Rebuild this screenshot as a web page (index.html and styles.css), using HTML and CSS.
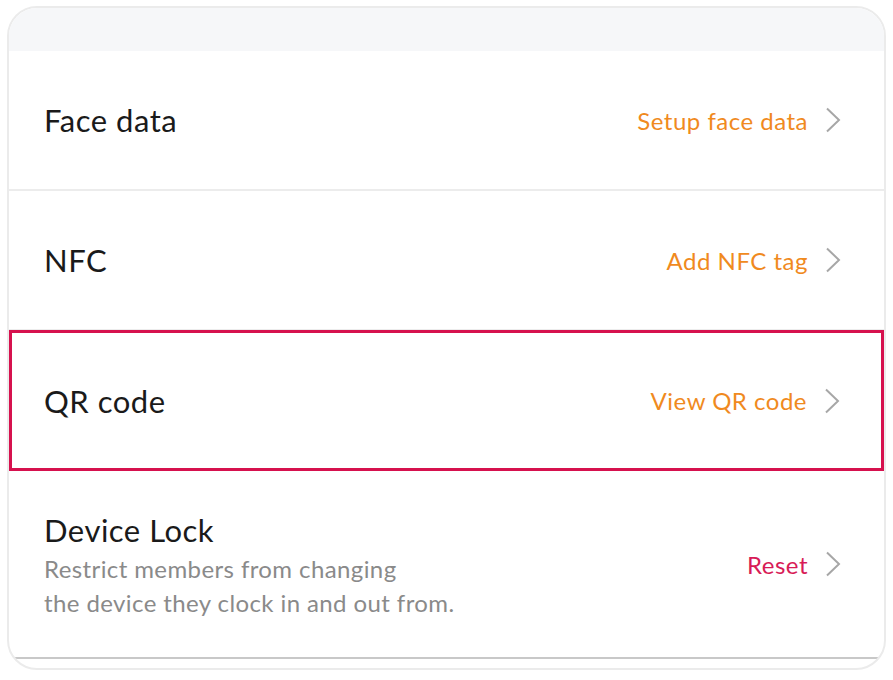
FILE: index.html
```html
<!DOCTYPE html>
<html>
<head>
<meta charset="utf-8">
<link rel="stylesheet" href="styles.css">
</head>
<body>
<div class="card">
  <div class="band"></div>
  <div class="row">
    <div class="label">Face data</div>
    <div class="action orange">Setup face data
      <svg class="chev" width="16" height="26" viewBox="0 0 16 26"><polyline points="2,1.5 14,13 2,24.5" fill="none" stroke="#a7a7a7" stroke-width="2"/></svg>
    </div>
  </div>
  <div class="row">
    <div class="label">NFC</div>
    <div class="action orange">Add NFC tag
      <svg class="chev" width="16" height="26" viewBox="0 0 16 26"><polyline points="2,1.5 14,13 2,24.5" fill="none" stroke="#a7a7a7" stroke-width="2"/></svg>
    </div>
  </div>
  <div class="row selected">
    <div class="label">QR code</div>
    <div class="action orange">View QR code
      <svg class="chev" width="16" height="26" viewBox="0 0 16 26"><polyline points="2,1.5 14,13 2,24.5" fill="none" stroke="#a7a7a7" stroke-width="2"/></svg>
    </div>
  </div>
  <div class="row tall">
    <div class="text">
      <div class="label">Device Lock</div>
      <div class="desc">Restrict members from changing<br>the device they clock in and out from.</div>
    </div>
    <div class="action red">Reset
      <svg class="chev" width="16" height="26" viewBox="0 0 16 26"><polyline points="2,1.5 14,13 2,24.5" fill="none" stroke="#a7a7a7" stroke-width="2"/></svg>
    </div>
  </div>
  <div class="foot"></div>
</div>
</body>
</html>
```
FILE: styles.css
```css
html, body {
  margin: 0;
  padding: 0;
  background: #ffffff;
}
body {
  font-family: "Lato", "Noto Sans", sans-serif;
  padding: 6px 7px 0 7px;
}
.card {
  height: 664px;
  border: 2px solid #ebebeb;
  border-radius: 30px;
  overflow: hidden;
  background: #fff;
  display: flex;
  flex-direction: column;
  box-sizing: border-box;
}
.band {
  height: 43px;
  background: #f6f7f9;
  flex: none;
}
.row {
  height: 138px;
  display: flex;
  align-items: center;
  justify-content: space-between;
  padding: 0 43px 0 35px;
  border-bottom: 2px solid #ececec;
  flex: none;
}
.row.selected {
  height: 135px;
  border: 3px solid #d6114e;
  margin-top: -1px;
  padding-left: 32px;
  padding-right: 41px;
}
.row.tall {
  border-bottom: 2px solid #c8c8c8;
  padding-top: 0;
  box-sizing: border-box;
  height: 188px;
}
.text {
  margin-top: 2px;
}
.label {
  font-size: 31px;
  color: #1a1a1a;
  letter-spacing: 0.5px;
}
.desc {
  font-size: 24px;
  color: #8a8a8a;
  line-height: 34px;
  margin-top: 3px;
  letter-spacing: 0.4px;
}
.action {
  font-size: 24px;
  letter-spacing: 0.5px;
  display: flex;
  align-items: center;
  gap: 17px;
}
.orange { color: #f08a1e; }
.red { color: #d81b57; }
.chev { display: block; }
.foot {
  flex: 1;
}
```
